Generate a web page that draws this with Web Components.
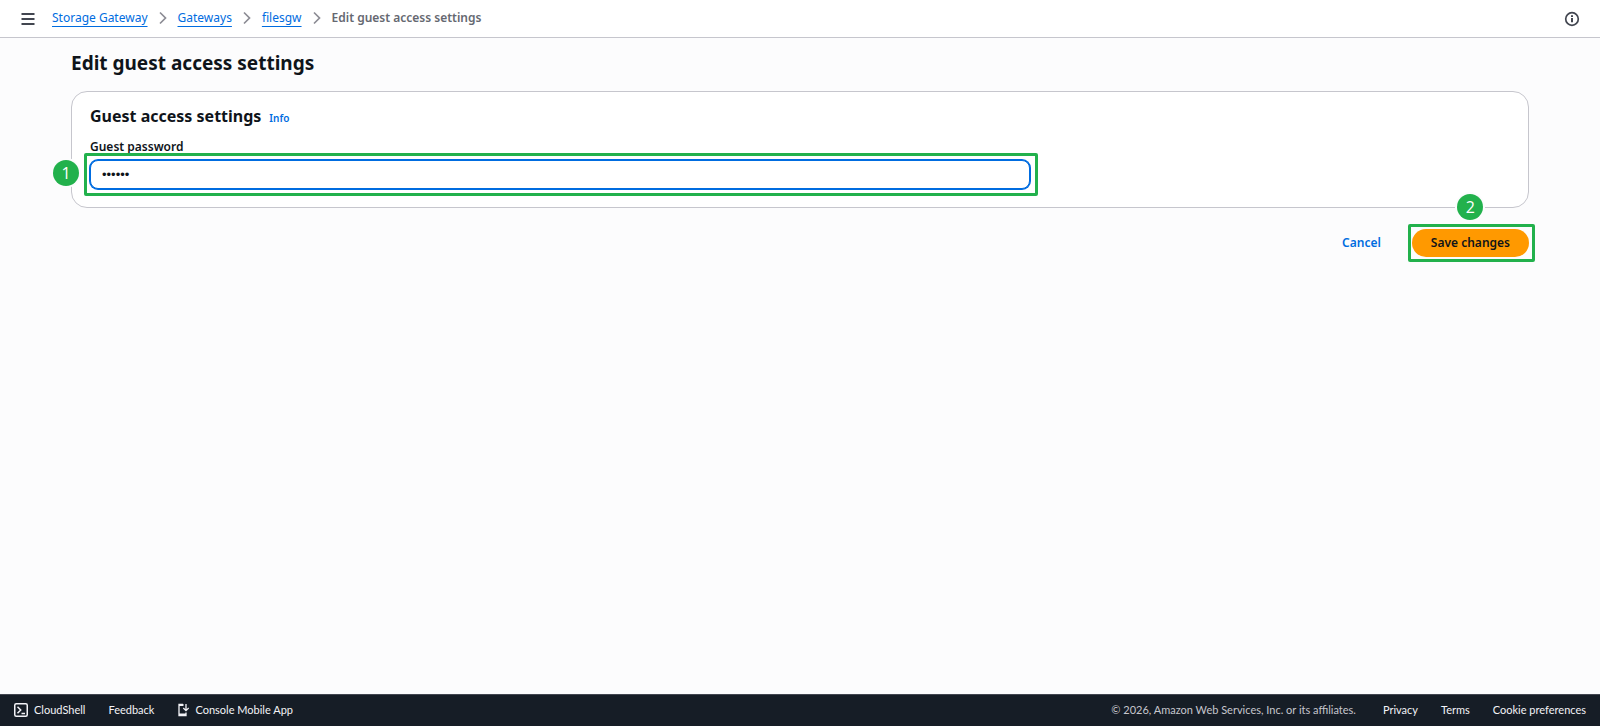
<!DOCTYPE html>
<html lang="en">
<head>
<meta charset="utf-8">
<title>Edit guest access settings</title>
<style>
  html, body { margin: 0; }
  body {
    --link: #006ce0;
    --text: #0f141a;
    --page: #fcfcfd;
    --line: #c6c6cd;
    --mark: #22b14c;
    background: var(--page);
    color: var(--text);
    font: 12px/20px "Noto Sans", "Open Sans", sans-serif;
  }
</style>
</head>
<body>

<console-page>
  <top-bar slot="top">
    <bread-crumb href="#storage-gateway">Storage Gateway</bread-crumb>
    <bread-crumb href="#gateways">Gateways</bread-crumb>
    <bread-crumb href="#filesgw">filesgw</bread-crumb>
    <bread-crumb>Edit guest access settings</bread-crumb>
  </top-bar>

  <span slot="heading">Edit guest access settings</span>

  <settings-card>
    <span slot="title">Guest access settings</span>
    <password-field label="Guest password" value="guest1"></password-field>
  </settings-card>

  <form-actions></form-actions>

  <console-footer slot="footer"></console-footer>
</console-page>

<script>
// Small helper: every element gets an open root filled from a template.
function define(name, render) {
  customElements.define(name, class extends HTMLElement {
    connectedCallback() {
      if (this.shadowRoot) return;
      const tpl = document.createElement('template');
      tpl.innerHTML = render(this);
      this.attachShadow({ mode: 'open' }).append(tpl.content.cloneNode(true));
    }
  });
}

define('console-page', () => `
  <style>
    :host { display: flex; flex-direction: column; min-height: 100vh; }
    main { flex: 1; padding: 13px 71px 20px; }
    h1 { margin: 0 0 16px; font-size: 19px; font-weight: 700; line-height: 24px; }
  </style>
  <slot name="top"></slot>
  <main>
    <h1><slot name="heading"></slot></h1>
    <slot></slot>
  </main>
  <slot name="footer"></slot>
`);

define('top-bar', () => `
  <style>
    :host {
      display: flex; align-items: center; height: 37px; padding: 0 20px;
      background: #fff; border-bottom: 1px solid var(--line);
    }
    button { display: flex; padding: 0; border: 0; background: none; color: #424650; cursor: pointer; }
    nav { display: flex; flex: 1; margin-left: 16px; padding-bottom: 2px; }
    svg { fill: none; stroke: currentColor; stroke-width: 2; }
  </style>
  <button aria-label="Open navigation">
    <svg width="16" height="16" viewBox="0 0 16 16"><path d="M1.500 3h13M1.500 8h13M1.500 13h13"/></svg>
  </button>
  <nav aria-label="Breadcrumbs"><slot></slot></nav>
  <button aria-label="Open help panel">
    <svg width="16" height="16" viewBox="0 0 16 16">
      <circle cx="8" cy="8" r="6.300" stroke-width="1.700"/>
      <path d="M8 7v4.200M8 4.300v1.700"/>
    </svg>
  </button>
`);

// A crumb with no href is the current page and has no chevron after it.
define('bread-crumb', el => `
  <style>
    :host { display: flex; align-items: center; }
    a { color: var(--link); text-decoration: underline; text-underline-offset: 4px; text-decoration-thickness: 1px; }
    span { color: #656871; font-weight: 600; }
    svg { margin: 1px 7px 0; fill: none; stroke: #8c8c94; stroke-width: 1.7; }
  </style>
  ${el.hasAttribute('href')
    ? `<a href="${el.getAttribute('href')}"><slot></slot></a>
       <svg width="16" height="16" viewBox="0 0 16 16" aria-hidden="true"><path d="M5 2.500L10.500 8 5 13.500"/></svg>`
    : '<span aria-current="page"><slot></slot></span>'}
`);

define('settings-card', () => `
  <style>
    :host {
      display: block; padding: 12px 18px 18px;
      background: #fff; border: 1px solid var(--line); border-radius: 16px;
    }
    header { display: flex; align-items: baseline; gap: 8px; margin-bottom: 9px; }
    h2 { margin: 0; font-size: 16px; font-weight: 700; line-height: 24px; }
    a { color: var(--link); font-size: 10px; font-weight: 600; text-decoration: none; }
    .grid { display: grid; grid-template-columns: repeat(3, 1fr); gap: 20px; }
    ::slotted(password-field) { grid-column: span 2; }
  </style>
  <header><h2><slot name="title"></slot></h2><a href="#info">Info</a></header>
  <div class="grid"><slot></slot></div>
`);

define('password-field', el => `
  <style>
    :host { display: block; }
    label { display: block; margin-bottom: 3px; font-weight: 600; }
    .control { position: relative; display: flex; }
    input {
      flex: 1; box-sizing: border-box; height: 29px; padding: 0 11px;
      border: 1px solid var(--link); border-radius: 8px; outline: 0;
      box-shadow: 0 0 0 1px var(--link);
      background: #fff; color: var(--text); font: 13px "Liberation Sans", sans-serif;
    }
    step-mark { --inset: -7px -8px -7px -6px; --badge-left: -37px; --badge-top: 0; }
  </style>
  <label for="field">${el.getAttribute('label')}</label>
  <div class="control">
    <input id="field" type="password" autocomplete="off" value="${el.getAttribute('value')}">
    <step-mark>1</step-mark>
  </div>
`);

define('form-actions', () => `
  <style>
    :host { display: flex; justify-content: flex-end; gap: 12px; margin-top: 21px; }
    button {
      height: 28px; padding: 0 19px; border: 0; border-radius: 14px;
      background: none; color: var(--link); font: inherit; font-weight: 600; cursor: pointer;
    }
    .primary { background: #ff9900; color: var(--text); }
    .target { position: relative; display: flex; }
    step-mark { --inset: -5px -6px -5px -4px; --badge-left: calc(50% - 13px); --badge-top: -35px; }
  </style>
  <button>Cancel</button>
  <div class="target">
    <button class="primary">Save changes</button>
    <step-mark>2</step-mark>
  </div>
`);

// Numbered frame laid over the control it points at.
define('step-mark', () => `
  <style>
    :host { position: absolute; inset: 0; pointer-events: none; }
    .frame { position: absolute; inset: var(--inset); border: 3px solid var(--mark); border-radius: 2px; }
    .badge {
      position: absolute; left: var(--badge-left); top: var(--badge-top);
      width: 26px; height: 26px; border-radius: 50%;
      background: var(--mark); box-shadow: 0 0 0 2px var(--page); color: #fff;
      font: 16px/26px "Open Sans", sans-serif; text-align: center;
    }
  </style>
  <div class="frame"></div>
  <div class="badge"><slot></slot></div>
`);

define('console-footer', () => `
  <style>
    :host {
      display: flex; align-items: center; justify-content: space-between;
      height: 29px; padding: 0 14px 2px;
      background: #161d26; border-top: 1px solid #424650; color: #c6c6cd;
      font: 11px/16px Lato, "Noto Sans", sans-serif;
    }
    div { display: flex; align-items: center; gap: 23px; }
    a { display: flex; align-items: center; gap: 6px; color: #f3f3f7; text-decoration: none; }
    svg { fill: none; stroke: currentColor; }
    .legal { margin-right: 4px; }
  </style>
  <div>
    <a href="#cloudshell">
      <svg width="14" height="14" viewBox="0 0 14 14" aria-hidden="true">
        <rect x=".75" y=".75" width="12.5" height="12.5" rx="1.5" stroke-width="1.5"/>
        <path d="M3.5 3.8L6.7 7l-3.2 3.2M7.5 10.5h3.5" stroke-width="1.5"/>
      </svg>CloudShell</a>
    <a href="#feedback">Feedback</a>
    <a href="#mobile">
      <svg width="12" height="14" viewBox="0 0 12 14" aria-hidden="true">
        <path d="M6 1.500H2v11h7V9.500" stroke-width="1.300"/>
        <path d="M2 11.500h7" stroke-width="2"/>
        <path d="M2 2h4.500" stroke-width="2"/>
        <path d="M9 1v6.500M6.300 5L9 7.600 11.700 5" stroke-width="1.300"/>
      </svg>Console Mobile App</a>
  </div>
  <div>
    <span class="legal">© 2026, Amazon Web Services, Inc. or its affiliates.</span>
    <a href="#privacy">Privacy</a>
    <a href="#terms">Terms</a>
    <a href="#cookies">Cookie preferences</a>
  </div>
`);
</script>
</body>
</html>
